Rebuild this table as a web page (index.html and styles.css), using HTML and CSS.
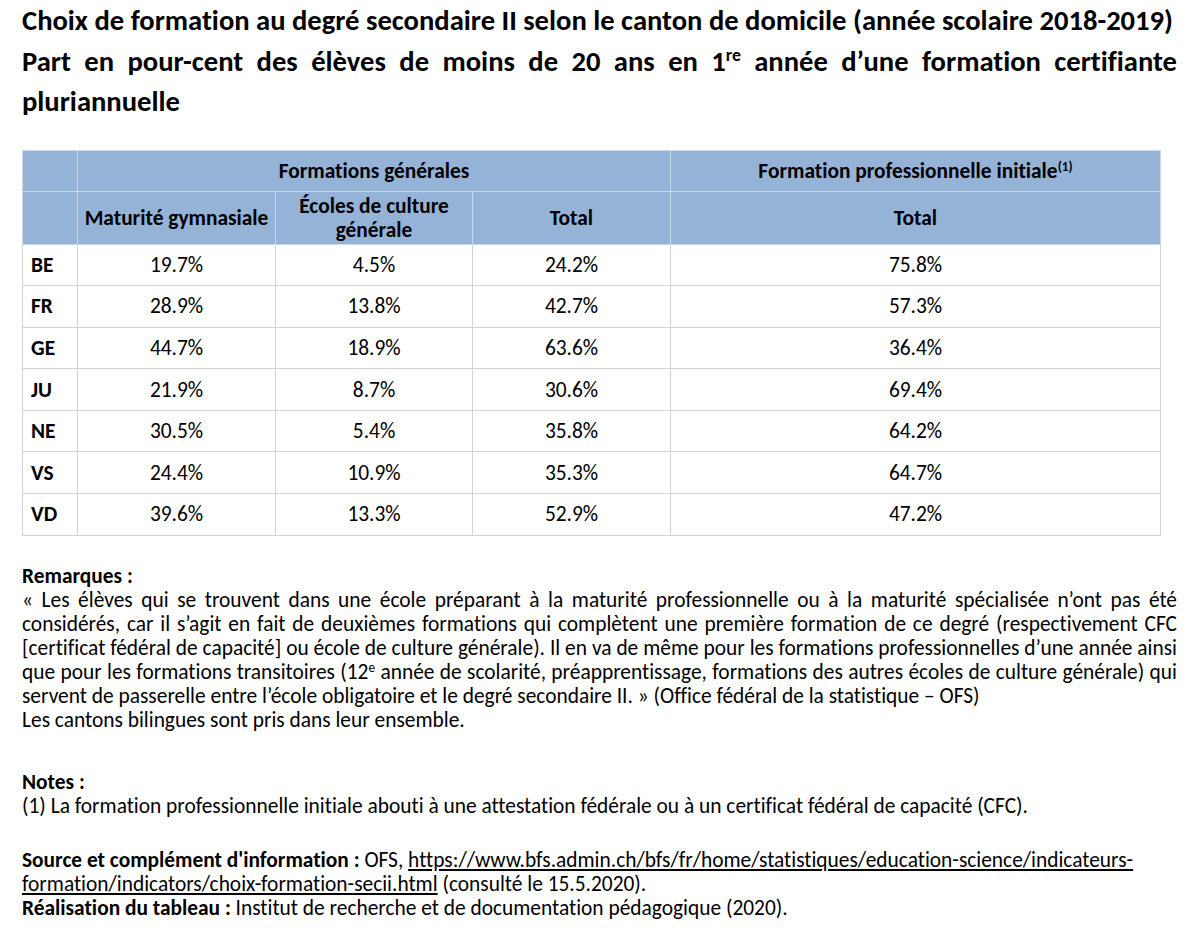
FILE: index.html
```html
<!DOCTYPE html>
<html lang="fr">
<head>
<meta charset="utf-8">
<title>Choix de formation au degré secondaire II</title>
<link rel="stylesheet" href="styles.css">
</head>
<body>
<div class="page">
  <h1 class="title">
    <span class="nline">Choix de formation au degré secondaire II selon le canton de domicile (année scolaire 2018-2019)</span>
    <span class="jline">Part en pour-cent des élèves de moins de 20 ans en 1<sup>re</sup> année d’une formation certifiante</span>
    <span class="lline">pluriannuelle</span>
  </h1>

  <table class="data">
    <colgroup>
      <col class="c-canton">
      <col class="c-mat">
      <col class="c-ecg">
      <col class="c-tot">
      <col class="c-pro">
    </colgroup>
    <thead>
      <tr class="h1">
        <th></th>
        <th colspan="3">Formations générales</th>
        <th>Formation professionnelle initiale<sup>(1)</sup></th>
      </tr>
      <tr class="h2">
        <th></th>
        <th class="nowrap">Maturité gymnasiale</th>
        <th>Écoles de culture<br>générale</th>
        <th>Total</th>
        <th>Total</th>
      </tr>
    </thead>
    <tbody>
      <tr><th>BE</th><td>19.7%</td><td>4.5%</td><td>24.2%</td><td>75.8%</td></tr>
      <tr><th>FR</th><td>28.9%</td><td>13.8%</td><td>42.7%</td><td>57.3%</td></tr>
      <tr><th>GE</th><td>44.7%</td><td>18.9%</td><td>63.6%</td><td>36.4%</td></tr>
      <tr><th>JU</th><td>21.9%</td><td>8.7%</td><td>30.6%</td><td>69.4%</td></tr>
      <tr><th>NE</th><td>30.5%</td><td>5.4%</td><td>35.8%</td><td>64.2%</td></tr>
      <tr><th>VS</th><td>24.4%</td><td>10.9%</td><td>35.3%</td><td>64.7%</td></tr>
      <tr><th>VD</th><td>39.6%</td><td>13.3%</td><td>52.9%</td><td>47.2%</td></tr>
    </tbody>
  </table>

  <section class="block remarks">
    <p class="label">Remarques :</p>
    <p class="para">
      <span class="jline">« Les élèves qui se trouvent dans une école préparant à la maturité professionnelle ou à la maturité spécialisée n’ont pas été</span>
      <span class="jline">considérés, car il s’agit en fait de deuxièmes formations qui complètent une première formation de ce degré (respectivement CFC</span>
      <span class="jline">[certificat fédéral de capacité] ou école de culture générale). Il en va de même pour les formations professionnelles d’une année ainsi</span>
      <span class="jline">que pour les formations transitoires (12<sup>e</sup> année de scolarité, préapprentissage, formations des autres écoles de culture générale) qui</span>
      <span class="lline">servent de passerelle entre l’école obligatoire et le degré secondaire II. » (Office fédéral de la statistique – OFS)</span>
    </p>
    <p>Les cantons bilingues sont pris dans leur ensemble.</p>
  </section>

  <section class="block notes">
    <p class="label">Notes :</p>
    <p>(1) La formation professionnelle initiale abouti à une attestation fédérale ou à un certificat fédéral de capacité (CFC).</p>
  </section>

  <section class="block sources">
    <p><b>Source et complément d'information :</b> OFS, <a class="url" href="#">https://www.bfs.admin.ch/bfs/fr/home/statistiques/education-science/indicateurs-<br>formation/indicators/choix-formation-secii.html</a> (consulté le 15.5.2020).</p>
    <p><b>Réalisation du tableau :</b> Institut de recherche et de documentation pédagogique (2020).</p>
  </section>
</div>
</body>
</html>
```

FILE: styles.css
```css
* {
  box-sizing: border-box;
}

html, body {
  margin: 0;
  padding: 0;
  background: #ffffff;
}

body {
  font-family: Carlito, Calibri, Lato, sans-serif;
  font-variant-ligatures: none;
  color: #000000;
  font-size: 21.4px;
  line-height: 24px;
}

.page {
  width: 1177px;
  padding: 1px 0 0 22px;
}

p {
  margin: 0;
}

sup {
  font-size: 0.62em;
  line-height: 0;
  vertical-align: 0.55em;
}

.jline {
  display: block;
  white-space: nowrap;
  text-align: justify;
  text-align-last: justify;
}

.lline,
.nline {
  display: block;
  white-space: nowrap;
  text-align: left;
}

.title {
  margin: 0;
  font-size: 28.6px;
  font-weight: 700;
  line-height: 40.5px;
}

.data {
  margin-top: 27px;
  border-collapse: collapse;
  table-layout: fixed;
  width: 1138px;
}

.c-canton { width: 55px; }
.c-mat { width: 198px; }
.c-ecg { width: 197px; }
.c-tot { width: 198px; }
.c-pro { width: 490px; }

.data th,
.data td {
  border: 1px solid #d3d3d3;
  padding: 0 6px;
  text-align: center;
  vertical-align: middle;
  font-weight: 400;
}

.data th.nowrap {
  white-space: nowrap;
  padding: 0;
}

.data thead th {
  background: #95b3d7;
  font-weight: 700;
  border-color: #cbd8e8;
}

.data tr.h1 th {
  height: 41px;
}

.data tr.h2 th {
  height: 53px;
}

.data tbody tr {
  height: 41.6px;
}

.data tbody th {
  text-align: left;
  font-weight: 700;
  padding-left: 8px;
}

.block {
  margin-top: 28px;
}

.label {
  font-weight: 700;
}

.notes {
  margin-top: 38px;
}

.sources {
  margin-top: 30px;
}

.url {
  color: inherit;
  text-decoration: underline;
}
```
